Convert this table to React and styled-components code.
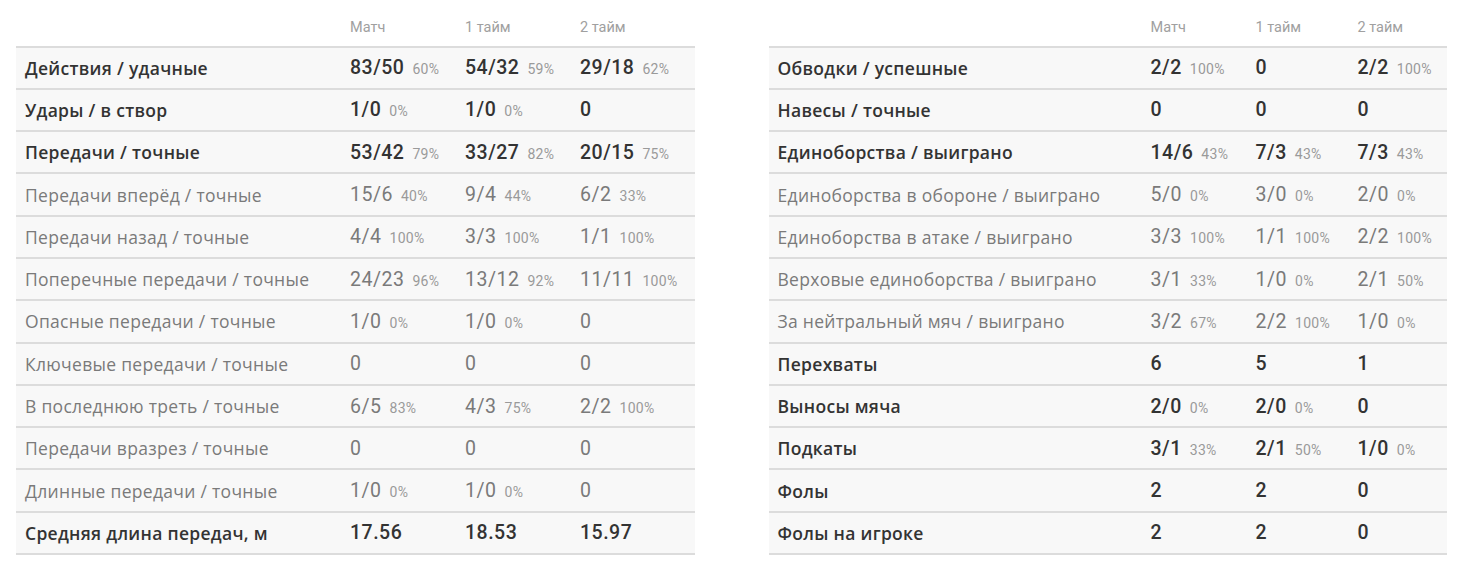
import React from 'react';
import styled, { createGlobalStyle } from 'styled-components';

const GlobalStyle = createGlobalStyle`
  html, body {
    margin: 0;
    padding: 0;
    background: #ffffff;
  }
  body {
    font-family: "Open Sans", "Liberation Sans", sans-serif;
  }
`;

const Page = styled.div`
  display: flex;
  gap: 74px;
  padding: 10px 13px 0 16px;
  width: 1460px;
  box-sizing: border-box;
`;

const Table = styled.div`
  width: 679px;
  display: flex;
  flex-direction: column;
`;

const Row = styled.div`
  display: grid;
  grid-template-columns: ${({ cols }) => cols};
  align-items: center;
  height: 40.3px;
  background: #f8f8f8;
  border-bottom: 2px solid #dcdcdc;
`;

const HeadRow = styled(Row)`
  height: 35.5px;
  background: #ffffff;
`;

const HeadCell = styled.div`
  padding-left: 9px;
  font-family: Roboto, "Liberation Sans", sans-serif;
  font-size: 14.5px;
  color: #a0a0a0;
`;

const Label = styled.div`
  padding-left: 9px;
  font-size: 17.5px;
  letter-spacing: 0.3px;
  font-weight: ${({ main }) => (main ? 600 : 400)};
  color: ${({ main }) => (main ? '#333333' : '#7a7a7a')};
  white-space: nowrap;
`;

const Value = styled.div`
  padding-left: 9px;
  font-family: Roboto, "Liberation Sans", sans-serif;
  font-size: 19.5px;
  letter-spacing: 0.5px;
  font-weight: ${({ main }) => (main ? 500 : 400)};
  color: ${({ main }) => (main ? '#333333' : '#7a7a7a')};
  white-space: nowrap;
`;

const Pct = styled.span`
  margin-left: 8px;
  font-size: 14px;
  letter-spacing: 0.3px;
  font-weight: 400;
  color: #9a9a9a;
`;

const left = [
  ['Действия / удачные', true, ['83/50', '60%'], ['54/32', '59%'], ['29/18', '62%']],
  ['Удары / в створ', true, ['1/0', '0%'], ['1/0', '0%'], ['0']],
  ['Передачи / точные', true, ['53/42', '79%'], ['33/27', '82%'], ['20/15', '75%']],
  ['Передачи вперёд / точные', false, ['15/6', '40%'], ['9/4', '44%'], ['6/2', '33%']],
  ['Передачи назад / точные', false, ['4/4', '100%'], ['3/3', '100%'], ['1/1', '100%']],
  ['Поперечные передачи / точные', false, ['24/23', '96%'], ['13/12', '92%'], ['11/11', '100%']],
  ['Опасные передачи / точные', false, ['1/0', '0%'], ['1/0', '0%'], ['0']],
  ['Ключевые передачи / точные', false, ['0'], ['0'], ['0']],
  ['В последнюю треть / точные', false, ['6/5', '83%'], ['4/3', '75%'], ['2/2', '100%']],
  ['Передачи вразрез / точные', false, ['0'], ['0'], ['0']],
  ['Длинные передачи / точные', false, ['1/0', '0%'], ['1/0', '0%'], ['0']],
  ['Средняя длина передач, м', true, ['17.56'], ['18.53'], ['15.97']],
];

const right = [
  ['Обводки / успешные', true, ['2/2', '100%'], ['0'], ['2/2', '100%']],
  ['Навесы / точные', true, ['0'], ['0'], ['0']],
  ['Единоборства / выиграно', true, ['14/6', '43%'], ['7/3', '43%'], ['7/3', '43%']],
  ['Единоборства в обороне / выиграно', false, ['5/0', '0%'], ['3/0', '0%'], ['2/0', '0%']],
  ['Единоборства в атаке / выиграно', false, ['3/3', '100%'], ['1/1', '100%'], ['2/2', '100%']],
  ['Верховые единоборства / выиграно', false, ['3/1', '33%'], ['1/0', '0%'], ['2/1', '50%']],
  ['За нейтральный мяч / выиграно', false, ['3/2', '67%'], ['2/2', '100%'], ['1/0', '0%']],
  ['Перехваты', true, ['6'], ['5'], ['1']],
  ['Выносы мяча', true, ['2/0', '0%'], ['2/0', '0%'], ['0']],
  ['Подкаты', true, ['3/1', '33%'], ['2/1', '50%'], ['1/0', '0%']],
  ['Фолы', true, ['2'], ['2'], ['0']],
  ['Фолы на игроке', true, ['2'], ['2'], ['0']],
];

const StatTable = ({ rows, cols }) => (
  <Table>
    <HeadRow cols={cols}>
      <HeadCell />
      <HeadCell>Матч</HeadCell>
      <HeadCell>1 тайм</HeadCell>
      <HeadCell>2 тайм</HeadCell>
    </HeadRow>
    {rows.map(([label, main, ...vals]) => (
      <Row key={label} cols={cols}>
        <Label main={main}>{label}</Label>
        {vals.map(([v, p], i) => (
          <Value key={i} main={main}>
            {v}
            {p && <Pct>{p}</Pct>}
          </Value>
        ))}
      </Row>
    ))}
  </Table>
);

export default function App() {
  return (
    <>
      <GlobalStyle />
      <Page>
        <StatTable rows={left} cols="325px 115px 115px 1fr" />
        <StatTable rows={right} cols="373px 105px 102px 1fr" />
      </Page>
    </>
  );
}
